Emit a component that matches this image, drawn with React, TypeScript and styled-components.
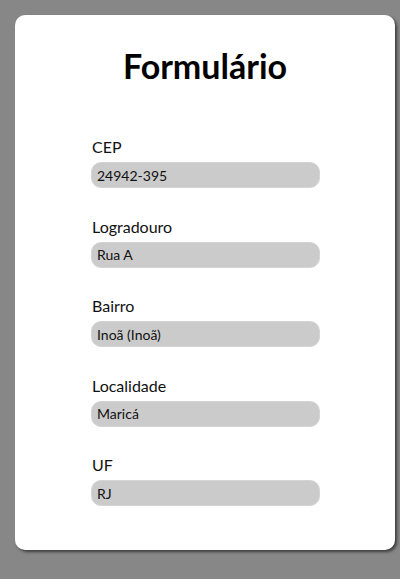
import styled, { createGlobalStyle } from "styled-components";

const GlobalStyle = createGlobalStyle`
  html, body {
    margin: 0;
    padding: 0;
    background: #878787;
  }
  * {
    box-sizing: border-box;
  }
`;

const fields = [
  { label: "CEP", value: "24942-395" },
  { label: "Logradouro", value: "Rua A" },
  { label: "Bairro", value: "Inoã (Inoã)" },
  { label: "Localidade", value: "Maricá" },
  { label: "UF", value: "RJ" },
];

const App = () => {
  return (
    <>
      <GlobalStyle />
      <Page>
        <Card>
          <Title>Formulário</Title>
          <Form>
            {fields.map((field) => (
              <Field key={field.label}>
                <Label>{field.label}</Label>
                <Input readOnly value={field.value} />
              </Field>
            ))}
          </Form>
        </Card>
      </Page>
    </>
  );
};

export default App;

const Page = styled.div`
  width: 400px;
  height: 579px;
  padding: 15px 5px 0 15px;
`;

const Card = styled.div`
  width: 380px;
  height: 535px;
  background: #ffffff;
  border-radius: 10px;
  box-shadow: 2px 2px 3px rgba(0, 0, 0, 0.55);
  padding: 31px 0 0 76px;
`;

const Title = styled.h1`
  margin: 0 0 0 -76px;
  text-align: center;
  font-family: "Lato", sans-serif;
  font-weight: 700;
  font-size: 34px;
  line-height: 40px;
  color: #000;
`;

const Form = styled.div`
  display: flex;
  flex-direction: column;
  gap: 28.5px;
  margin-top: 51px;
`;

const Field = styled.div`
  display: flex;
  flex-direction: column;
  gap: 6px;
`;

const Label = styled.label`
  font-family: "Lato", sans-serif;
  font-size: 16px;
  line-height: 19px;
  color: #111;
  padding-left: 1px;
`;

const Input = styled.input`
  width: 229px;
  height: 26px;
  border: 1px solid #d4d4d4;
  border-radius: 10px;
  background: #cbcbcb;
  padding: 0 5px;
  font-family: "Lato", sans-serif;
  font-size: 14px;
  color: #111;
  outline: none;
`;
